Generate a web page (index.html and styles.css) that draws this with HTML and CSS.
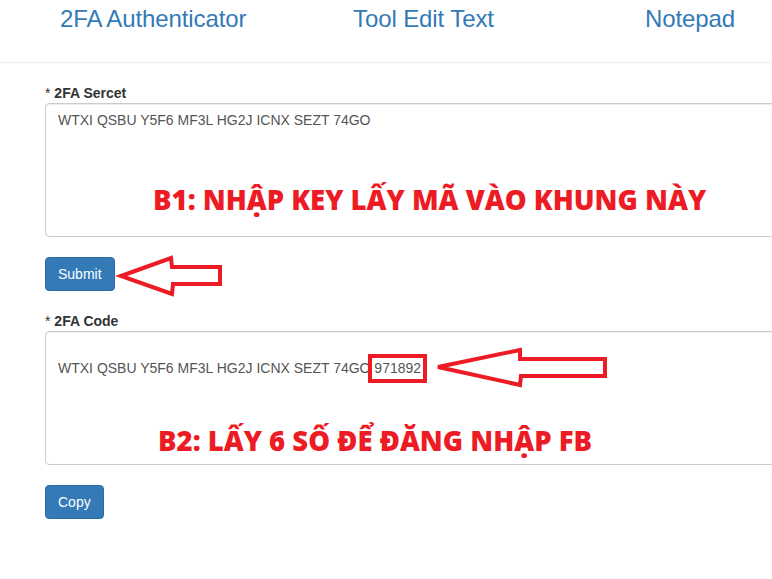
FILE: index.html
```html
<!DOCTYPE html>
<html lang="vi">
<head>
<meta charset="utf-8">
<title>2FA Authenticator</title>
<link rel="stylesheet" href="styles.css">
</head>
<body>
<nav class="topnav">
  <a class="nav-link" href="#">2FA Authenticator</a>
  <a class="nav-link" href="#">Tool Edit Text</a>
  <a class="nav-link" href="#">Notepad</a>
</nav>
<main class="form">
  <div class="group">
    <label class="label"><span class="req">*</span> 2FA Sercet</label>
    <div class="field">
      <textarea class="input">WTXI QSBU Y5F6 MF3L HG2J ICNX SEZT 74GO</textarea>
      <span class="note note-1">B1: NHẬP KEY LẤY MÃ VÀO KHUNG NÀY</span>
    </div>
  </div>
  <button class="btn">Submit</button>
  <div class="group">
    <label class="label"><span class="req">*</span> 2FA Code</label>
    <div class="field">
      <textarea class="input">

WTXI QSBU Y5F6 MF3L HG2J ICNX SEZT 74GO 971892</textarea>
      <span class="note note-2">B2: LẤY 6 SỐ ĐỂ ĐĂNG NHẬP FB</span>
    </div>
  </div>
  <button class="btn">Copy</button>
</main>
<svg class="marks" width="772" height="579" viewBox="0 0 772 579" aria-hidden="true">
  <g fill="none" stroke="#ed1c24" stroke-width="4" stroke-linejoin="miter">
    <path d="M121 276 L171 258 L172 267 L220 267 L220 284 L173 284 L172 294 Z"/>
    <path d="M438 367 L520 350 L520 359 L605 359 L605 376 L521 376 L520 385 Z"/>
    <rect x="370" y="356" width="55" height="25"/>
  </g>
</svg>
</body>
</html>
```
FILE: styles.css
```css
html, body {
  margin: 0;
  padding: 0;
  overflow: hidden;
  background: #fff;
}
body {
  position: relative;
  width: 772px;
  height: 579px;
  font-family: "Liberation Sans", Arial, sans-serif;
  font-size: 14px;
  color: #333;
}
.topnav {
  display: flex;
  box-sizing: border-box;
  height: 63px;
  padding: 2px 0 0 60px;
  border-bottom: 1px solid #eee;
}
.nav-link {
  width: 293px;
  flex: none;
  font-size: 24px;
  letter-spacing: -0.1px;
  line-height: 34px;
  color: #337ab7;
  text-decoration: none;
}
.nav-link:nth-child(2) {
  width: 292px;
}
.nav-link:last-child {
  width: auto;
}
.form {
  box-sizing: border-box;
  width: 772px;
  padding: 20px 0 0 45px;
  display: flex;
  flex-direction: column;
  align-items: flex-start;
}
.group {
  display: flex;
  flex-direction: column;
  align-items: flex-start;
  align-self: stretch;
}
.label {
  font-weight: bold;
  font-size: 14px;
  line-height: 20px;
}
.req {
  font-weight: normal;
}
.field {
  position: relative;
  align-self: stretch;
  overflow: hidden;
}
.input {
  display: block;
  box-sizing: border-box;
  width: 760px;
  height: 134px;
  margin: 0;
  padding: 6px 12px;
  border: 1px solid #ccc;
  border-radius: 4px;
  box-shadow: inset 0 1px 1px rgba(0,0,0,.075);
  font-family: "Liberation Sans", Arial, sans-serif;
  font-size: 14px;
  line-height: 20px;
  color: #555;
  resize: none;
  background: #fff;
}
.note {
  position: absolute;
  white-space: nowrap;
  font-family: "Open Sans", "Noto Sans", sans-serif;
  font-weight: 800;
  font-size: 27.5px;
  line-height: 30px;
  color: #ed1c24;
}
.note-1 {
  left: 108px;
  top: 82px;
}
.note-2 {
  left: 113px;
  top: 95px;
}
.btn {
  margin: 20px 0 20px;
  padding: 6px 12px;
  font-family: "Liberation Sans", Arial, sans-serif;
  font-size: 14px;
  line-height: 20px;
  color: #fff;
  background: #337ab7;
  border: 1px solid #2e6da4;
  border-radius: 4px;
}
.marks {
  position: absolute;
  left: 0;
  top: 0;
  pointer-events: none;
}
```
